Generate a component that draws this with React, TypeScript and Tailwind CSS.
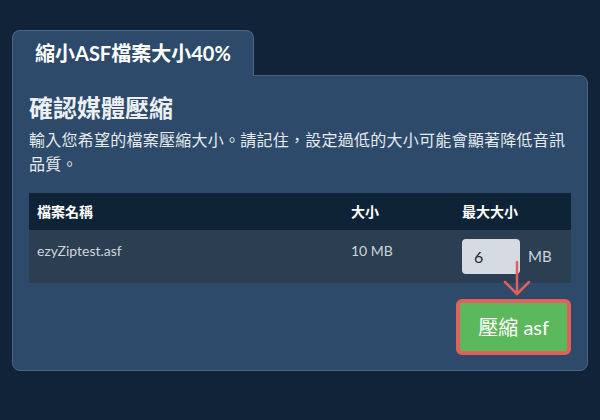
const rows = [{ name: 'ezyZiptest.asf', size: '10 MB', max: '6' }];

export default function App() {
  return (
    <div className="min-h-[420px] bg-[#112338] px-3 pt-[30px] font-['Lato','Noto_Sans_CJK_TC',sans-serif] text-[#e9edf2]">
      {/* Tab */}
      <div className="relative z-10 -mb-px inline-block rounded-t-lg border border-b-0 border-[#4b6584] bg-[#2d4a6a] px-[22px] py-[8px] text-[20px] font-bold leading-[29px] text-white">
        縮小ASF檔案大小40%
      </div>

      {/* Card */}
      <div className="rounded-b-lg rounded-tr-lg border border-[#4b6584] bg-[#2d4a6a] px-4 pb-[15px] pt-[16px]">
        <h2 className="text-[24px] font-bold leading-[32px] text-[#eceff3]">確認媒體壓縮</h2>
        <p className="mt-1 text-[16px] leading-[24px] tracking-[0.25px] text-[#e6eaef]">
          輸入您希望的檔案壓縮大小。請記住，設定過低的大小可能會顯著降低音訊品質。
        </p>

        <div className="relative mt-[17px]">
          <table className="w-full border-collapse text-left text-[14px]">
            <thead>
              <tr className="bg-[#0f2336] text-white">
                <th className="h-[37px] w-[314px] px-2 font-bold">檔案名稱</th>
                <th className="h-[37px] w-[111px] px-2 font-bold">大小</th>
                <th className="h-[37px] px-2 font-bold">最大大小</th>
              </tr>
            </thead>
            <tbody>
              {rows.map((r) => (
                <tr key={r.name} className="bg-[#2c3e52] text-[#cdd4dc]">
                  <td className="px-2 pb-[9px] pt-[10px] align-top leading-[22px]">{r.name}</td>
                  <td className="px-2 pb-[9px] pt-[10px] align-top leading-[22px]">{r.size}</td>
                  <td className="px-2 py-[9px] align-top">
                    <div className="flex items-center gap-[8px]">
                      <input
                        defaultValue={r.max}
                        className="h-[35px] w-[58px] rounded-sm bg-[#d6dbe3] pl-3 text-[16px] text-[#1f2a36] outline-none"
                      />
                      <span className="text-[15px] text-[#cdd4dc]">MB</span>
                    </div>
                  </td>
                </tr>
              ))}
            </tbody>
          </table>

          <div className="mt-4 flex justify-end">
            <button className="h-[56px] rounded-md border-4 border-[#e0605c] bg-[#5cb85c] px-[18px] text-[20px] text-white">
              壓縮 asf
            </button>
          </div>

          {/* hint arrow */}
          <svg
            className="pointer-events-none absolute left-[472px] top-[66px]"
            width="32"
            height="42"
            viewBox="0 0 32 42"
            fill="none"
            stroke="#e0605c"
            strokeWidth="2.5"
            strokeLinecap="round"
            strokeLinejoin="round"
          >
            <path d="M16 3 V35" />
            <path d="M4 23 L16 35 L28 23" />
          </svg>
        </div>
      </div>
    </div>
  );
}
